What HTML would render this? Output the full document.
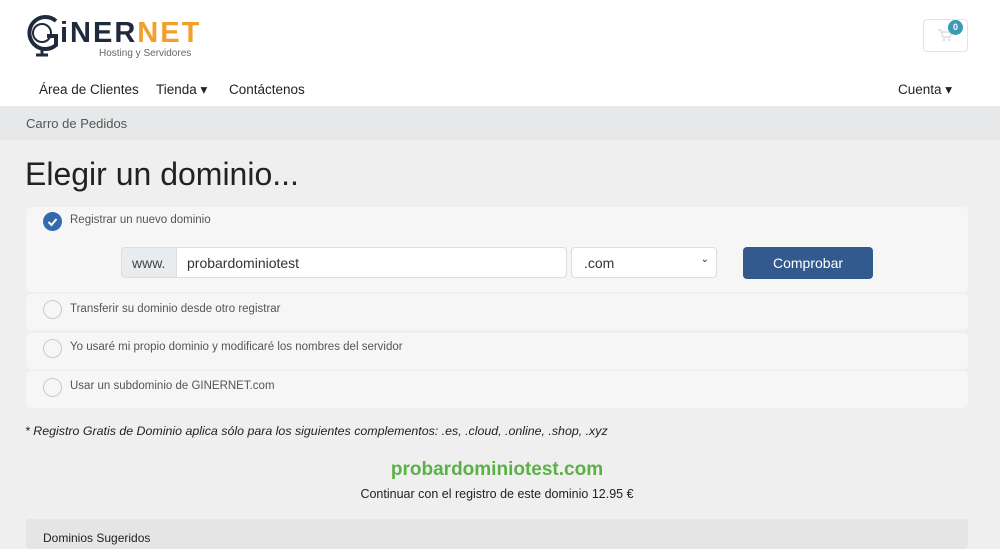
<!DOCTYPE html>
<html><head><meta charset="utf-8"><style>
*{box-sizing:border-box;margin:0;padding:0}
body{width:1000px;height:542px;overflow:hidden;background:#efefef;font-family:"Liberation Sans",sans-serif;color:#222;position:relative}
.abs{position:absolute}
.hdr{left:0;top:0;width:1000px;height:106px;background:#fff}
.nav{font-size:13.5px;color:#222;top:82px}
.crumb{left:0;top:106px;width:1000px;height:34px;background:#e6e8ea}
.panel{background:#f6f6f6;border-radius:5px;left:26px;width:942px}
.radio{width:19px;height:19px;border-radius:50%;border:1px solid #c9c9c9;background:#f6f6f6}
.lbl{font-size:11.5px;color:#555}
</style></head><body>
<div class="abs hdr"></div>
<svg class="abs" style="left:25px;top:12px" width="36" height="46" viewBox="0 0 36 46">
<path d="M31 9 A16 16 0 1 0 31 33 V24 H22" fill="none" stroke="#1f2a3a" stroke-width="4"/>
<circle cx="17" cy="21" r="9" fill="none" stroke="#1f2a3a" stroke-width="2"/>
<path d="M17 37 V42 M11 43 H23" stroke="#1f2a3a" stroke-width="3"/>
</svg>
<div class="abs" style="left:60px;top:16px;font-size:29px;font-weight:bold;letter-spacing:2px;line-height:34px"><span style="color:#1f2a3a">iNER</span><span style="color:#f3a02b">NET</span></div>
<div class="abs" style="left:99px;top:48px;font-size:10px;color:#666">Hosting y Servidores</div>
<div class="abs" style="left:923px;top:19px;width:45px;height:33px;border:1px solid #e3e3e3;border-radius:4px;background:#fff"></div>
<svg class="abs" style="left:937px;top:28px" width="16" height="14" viewBox="0 0 16 14"><path d="M1 2h3l2 7h7l2-5H5" fill="none" stroke="#ddd" stroke-width="1.4"/><circle cx="7" cy="12" r="1.2" fill="#ddd"/><circle cx="12" cy="12" r="1.2" fill="#ddd"/></svg>
<div class="abs" style="left:948px;top:20px;width:15px;height:15px;border-radius:50%;background:#3b9ab4;color:#fff;font-size:9px;font-weight:bold;text-align:center;line-height:15px">0</div>
<div class="abs nav" style="left:39px">Área de Clientes</div>
<div class="abs nav" style="left:156px">Tienda ▾</div>
<div class="abs nav" style="left:229px">Contáctenos</div>
<div class="abs nav" style="left:898px">Cuenta ▾</div>
<div class="abs crumb"></div>
<div class="abs" style="left:26px;top:116px;font-size:13px;color:#555">Carro de Pedidos</div>
<div class="abs" style="left:25px;top:156px;font-size:32px;color:#222">Elegir un dominio...</div>
<div class="abs panel" style="top:207px;height:85px"></div>
<div class="abs" style="left:43px;top:212px;width:19px;height:19px;border-radius:50%;background:#336aad"></div>
<svg class="abs" style="left:43px;top:212px" width="19" height="19"><path d="M5.5 10 l3 3 l5-6" fill="none" stroke="#fff" stroke-width="2"/></svg>
<div class="abs lbl" style="left:70px;top:214px">Registrar un nuevo dominio</div>
<div class="abs" style="left:121px;top:247px;width:56px;height:31px;background:#e9ecef;border:1px solid #ddd;border-radius:4px 0 0 4px;font-size:14px;color:#444;padding:7px 10px">www.</div>
<div class="abs" style="left:176px;top:247px;width:391px;height:31px;background:#fff;border:1px solid #ddd;border-radius:0 4px 4px 0;font-size:14px;color:#333;padding:7px 10px">probardominiotest</div>
<div class="abs" style="left:571px;top:247px;width:146px;height:31px;background:#fff;border:1px solid #ddd;border-radius:4px;font-size:14px;color:#333;padding:7px 12px">.com<span style="position:absolute;right:7px;top:6px;font-size:10px">⌄</span></div>
<div class="abs" style="left:743px;top:247px;width:130px;height:32px;background:#335a8f;border-radius:4px;color:#fff;font-size:14px;text-align:center;line-height:32px">Comprobar</div>
<div class="abs panel" style="top:294px;height:36px"></div>
<div class="abs radio" style="left:43px;top:300px"></div>
<div class="abs lbl" style="left:70px;top:303px">Transferir su dominio desde otro registrar</div>
<div class="abs panel" style="top:333px;height:36px"></div>
<div class="abs radio" style="left:43px;top:339px"></div>
<div class="abs lbl" style="left:70px;top:341px">Yo usaré mi propio dominio y modificaré los nombres del servidor</div>
<div class="abs panel" style="top:371px;height:37px"></div>
<div class="abs radio" style="left:43px;top:378px"></div>
<div class="abs lbl" style="left:70px;top:380px">Usar un subdominio de GINERNET.com</div>
<div class="abs" style="left:25px;top:424px;font-size:12.4px;font-style:italic;color:#222">* Registro Gratis de Dominio aplica sólo para los siguientes complementos: .es, .cloud, .online, .shop, .xyz</div>
<div class="abs" style="left:0;width:994px;top:459px;text-align:center;font-size:19px;font-weight:bold;color:#5cb048">probardominiotest.com</div>
<div class="abs" style="left:0;width:994px;top:487px;text-align:center;font-size:12.5px;color:#222">Continuar con el registro de este dominio 12.95 €</div>
<div class="abs" style="left:26px;top:519px;width:942px;height:30px;background:#e5e5e5;border-radius:4px"></div>
<div class="abs" style="left:43px;top:531px;font-size:12px;color:#222">Dominios Sugeridos</div>
</body></html>
